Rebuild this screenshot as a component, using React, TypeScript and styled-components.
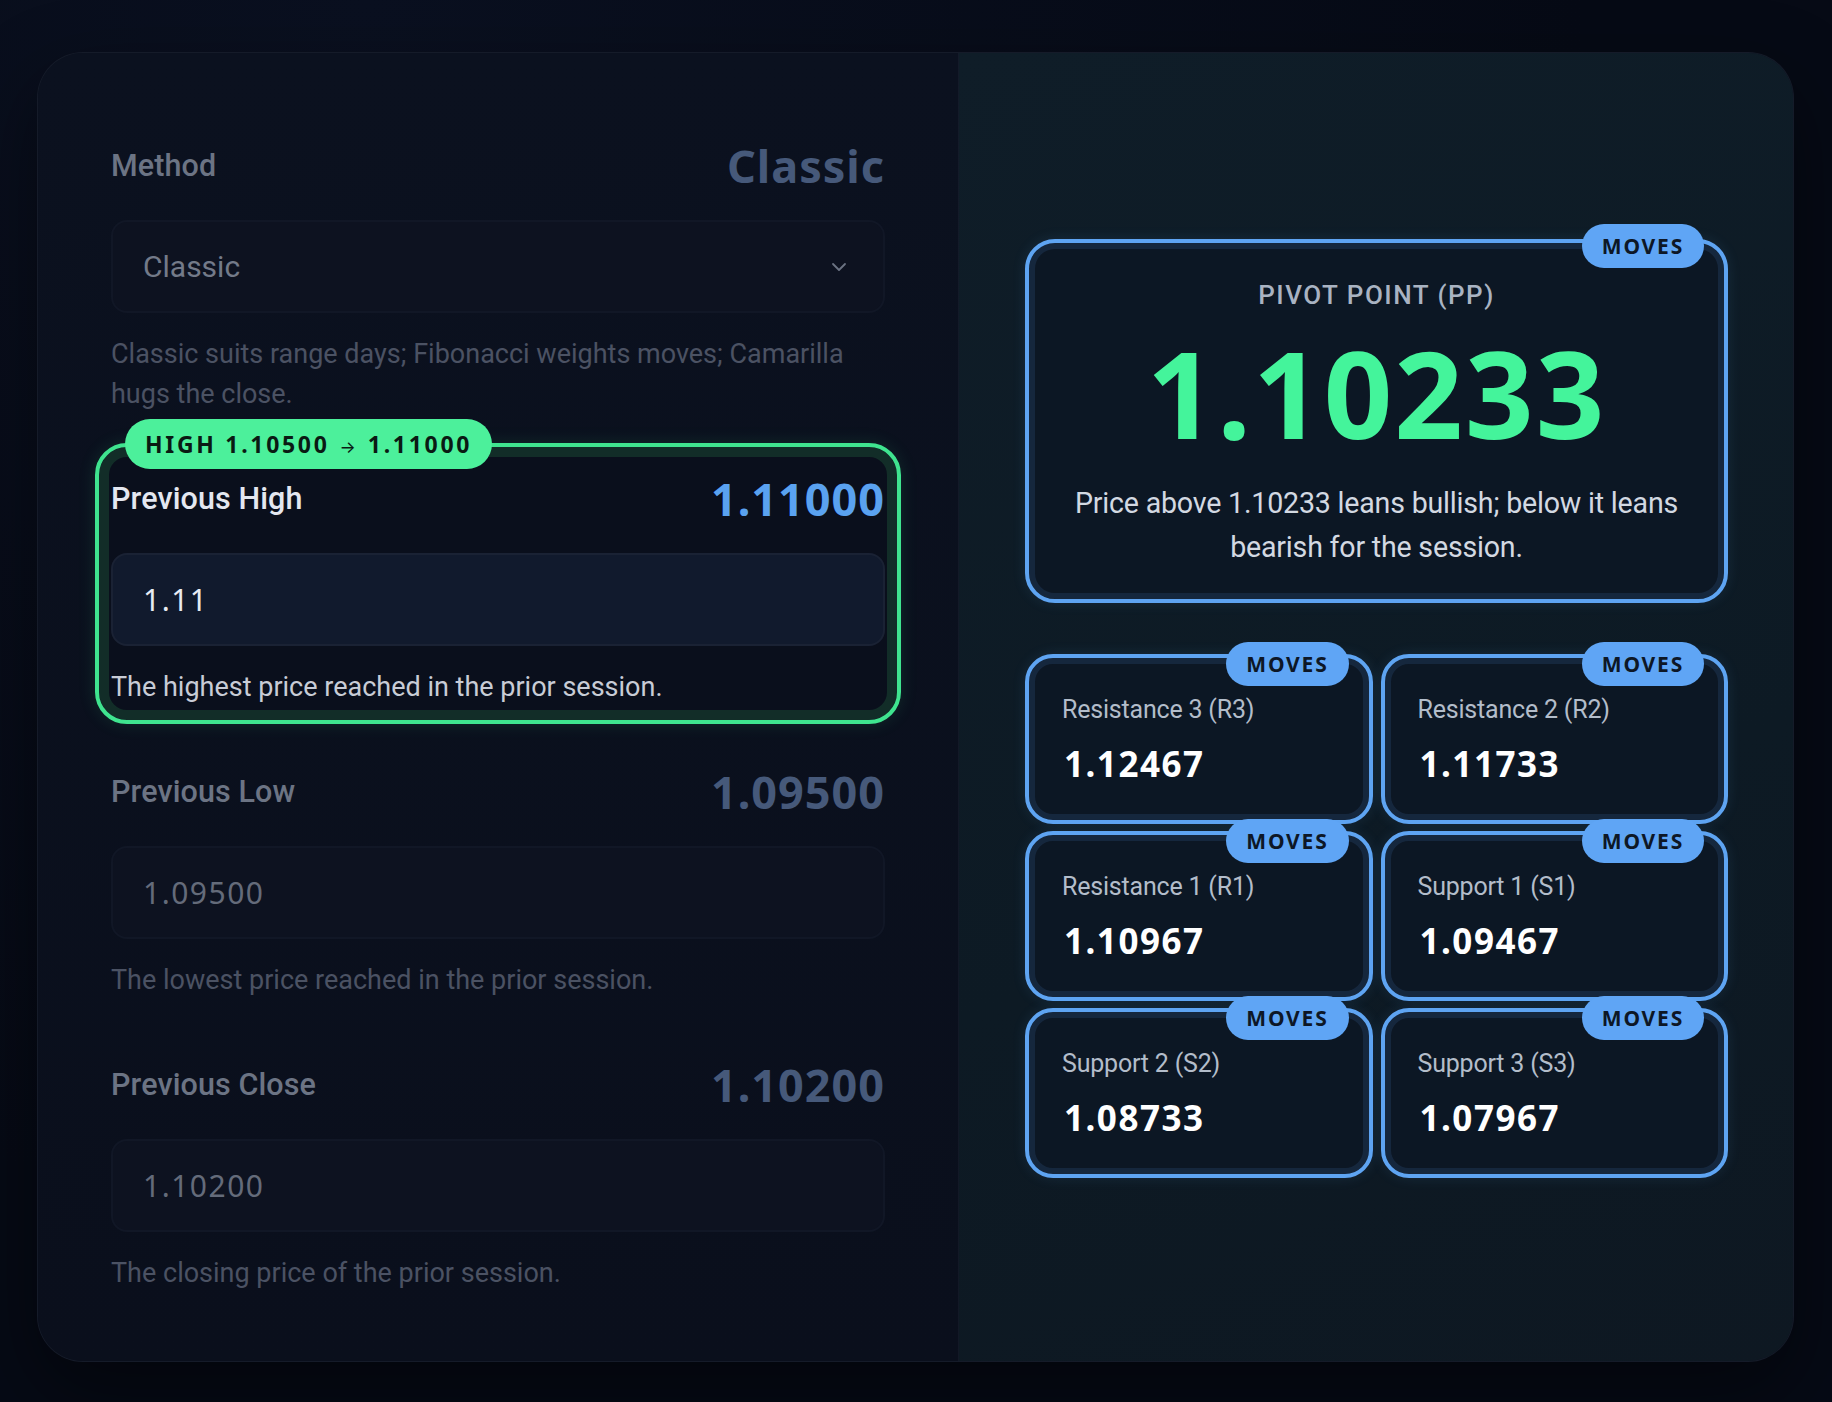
import styled, { createGlobalStyle, css } from "styled-components";

const GlobalStyle = createGlobalStyle`
    * {
        box-sizing: border-box;
    }

    body {
        margin: 0;
        background: radial-gradient(circle at 20% 0%, #0a1020 0%, #060a15 60%);
        font-family: Roboto, "Noto Sans", sans-serif;
        min-height: 100vh;
    }
`

const NUM_FONT = `"Noto Sans", Inter, sans-serif`

interface Field {
    id: string,
    label: string,
    value: string,
    input: string,
    help: string,
    active?: boolean,
    from?: string
}

const fields: Field[] = [
    {
        id: 'high',
        label: 'Previous High',
        value: '1.11000',
        input: '1.11',
        help: 'The highest price reached in the prior session.',
        active: true,
        from: '1.10500'
    },
    {
        id: 'low',
        label: 'Previous Low',
        value: '1.09500',
        input: '1.09500',
        help: 'The lowest price reached in the prior session.'
    },
    {
        id: 'close',
        label: 'Previous Close',
        value: '1.10200',
        input: '1.10200',
        help: 'The closing price of the prior session.'
    }
]

const levels = [
    { id: 'r3', label: 'Resistance 3 (R3)', value: '1.12467' },
    { id: 'r2', label: 'Resistance 2 (R2)', value: '1.11733' },
    { id: 'r1', label: 'Resistance 1 (R1)', value: '1.10967' },
    { id: 's1', label: 'Support 1 (S1)', value: '1.09467' },
    { id: 's2', label: 'Support 2 (S2)', value: '1.08733' },
    { id: 's3', label: 'Support 3 (S3)', value: '1.07967' }
]

const Chevron = () => (
    <svg width="16" height="10" viewBox="0 0 16 10" fill="none">
        <path d="M2 2l6 6 6-6" stroke="#6b7383" strokeWidth="1.8" strokeLinecap="round" strokeLinejoin="round" />
    </svg>
)

const App = () => {
    return (
        <>
            <GlobalStyle />
            <Page>
                <Card>
                    <Inputs>
                        <Group>
                            <LabelRow>
                                <Label $dim>Method</Label>
                                <Value $dim>Classic</Value>
                            </LabelRow>
                            <Select $dim>
                                <span>Classic</span>
                                <Chevron />
                            </Select>
                            <Help $dim>Classic suits range days; Fibonacci weights moves; Camarilla hugs the close.</Help>
                        </Group>
                        {
                            fields.map((f) => (
                                <Group key={f.id} $active={f.active}>
                                    {f.from && (
                                        <GreenBadge>
                                            HIGH {f.from}<Arrow>→</Arrow>{f.value}
                                        </GreenBadge>
                                    )}
                                    <LabelRow>
                                        <Label $dim={!f.active}>{f.label}</Label>
                                        <Value $dim={!f.active}>{f.value}</Value>
                                    </LabelRow>
                                    <NumInput $dim={!f.active} type="text" defaultValue={f.input} />
                                    <Help $dim={!f.active}>{f.help}</Help>
                                </Group>
                            ))
                        }
                    </Inputs>
                    <Results>
                        <PivotBox>
                            <BlueBadge $top={-19}>MOVES</BlueBadge>
                            <PivotTitle>PIVOT POINT (PP)</PivotTitle>
                            <PivotValue>1.10233</PivotValue>
                            <PivotText>Price above 1.10233 leans bullish; below it leans bearish for the session.</PivotText>
                        </PivotBox>
                        <LevelGrid>
                            {
                                levels.map((l) => (
                                    <LevelBox key={l.id}>
                                        <BlueBadge $top={-16}>MOVES</BlueBadge>
                                        <LevelLabel>{l.label}</LevelLabel>
                                        <LevelValue>{l.value}</LevelValue>
                                    </LevelBox>
                                ))
                            }
                        </LevelGrid>
                    </Results>
                </Card>
            </Page>
        </>
    )
}

export default App;

const Page = styled.div`
    padding: 52px 38px 40px 37px;
`

const Card = styled.div`
    width: 1757px;
    height: 1310px;
    display: grid;
    grid-template-columns: 921px 1fr;
    border-radius: 46px;
    overflow: hidden;
    border: 1px solid rgba(120, 140, 170, 0.09);
    background: #0b101d;
    box-shadow: 0 30px 80px rgba(0, 0, 0, 0.45);
`

const Inputs = styled.div`
    padding: 88px 73px 70px 73px;
    display: flex;
    flex-direction: column;
    gap: 60px;
    background: linear-gradient(180deg, #0b111f 0%, #0a0f1c 100%);
    border-right: 1px solid rgba(120, 140, 170, 0.08);
`

const Group = styled.div<{ $active?: boolean }>`
    display: flex;
    flex-direction: column;
    position: relative;

    ${({ $active }) => $active && css`
        margin: -31px -16px -17px;
        padding: 27px 12px 13px;
        border: 4px solid #3fe48f;
        border-radius: 32px;
        background: #0a0f1c;
        box-shadow: inset 0 0 0 10px #122d28, 0 0 18px rgba(63, 228, 143, 0.12);
    `}
`

const LabelRow = styled.div`
    height: 48px;
    display: flex;
    align-items: center;
    justify-content: space-between;
    margin-bottom: 31px;
`

const Label = styled.div<{ $dim?: boolean }>`
    font-size: 30.5px;
    font-weight: 500;
    letter-spacing: 0.1px;
    color: ${({ $dim }) => $dim ? '#6c7484' : '#e4e7f0'};
`

const Value = styled.div<{ $dim?: boolean }>`
    font-family: ${NUM_FONT};
    font-size: 45px;
    font-weight: 700;
    letter-spacing: 1px;
    font-variant-numeric: tabular-nums;
    color: ${({ $dim }) => $dim ? '#46597a' : '#5aa2f0'};
`

const fieldBox = css<{ $dim?: boolean }>`
    height: 93px;
    width: 100%;
    border-radius: 16px;
    border: 2px solid ${({ $dim }) => $dim ? '#111726' : '#1a2234'};
    background: ${({ $dim }) => $dim ? '#0d1220' : '#111a2d'};
    padding: 0 30px;
`

const Select = styled.div<{ $dim?: boolean }>`
    ${fieldBox};
    display: flex;
    align-items: center;
    justify-content: space-between;
    font-size: 30px;
    color: #737a89;

    & > svg {
        margin-right: 6px;
    }
`

const NumInput = styled.input<{ $dim?: boolean }>`
    ${fieldBox};
    outline: 0;
    font-family: ${NUM_FONT};
    font-size: 30px;
    letter-spacing: 1.5px;
    color: ${({ $dim }) => $dim ? '#646b7a' : '#e8ebf3'};
`

const Help = styled.p<{ $dim?: boolean }>`
    margin: 21px 0 0;
    font-size: 27px;
    line-height: 40px;
    color: ${({ $dim }) => $dim ? '#4b5263' : '#c8ccd6'};
`

const GreenBadge = styled.div`
    position: absolute;
    top: -28px;
    left: 26px;
    height: 50px;
    line-height: 50px;
    padding: 0 20px;
    border-radius: 25px;
    background: #4cf09b;
    color: #0a1a13;
    font-family: ${NUM_FONT};
    font-size: 23px;
    font-weight: 700;
    letter-spacing: 2.7px;
    white-space: nowrap;
`

const Arrow = styled.span`
    display: inline-block;
    margin: 0 12px 0 10px;
    font-size: 17px;
    font-weight: 400;
    letter-spacing: 0;
`

const Results = styled.div`
    padding: 0 65px 0 66px;
    display: flex;
    flex-direction: column;
    justify-content: center;
    gap: 51px;
    background: linear-gradient(160deg, #0f1d28 0%, #0d1a24 60%, #0e1822 100%);
`

const boxFrame = css`
    position: relative;
    border: 4px solid #5ea4f2;
    background: #0c1724;
    box-shadow: inset 0 0 0 6px rgba(40, 70, 110, 0.35), 0 0 14px rgba(94, 164, 242, 0.12);
`

const PivotBox = styled.div`
    ${boxFrame};
    border-radius: 30px;
    padding: 36px 40px 30px;
    display: flex;
    flex-direction: column;
    align-items: center;
    text-align: center;
`

const BlueBadge = styled.div<{ $top: number }>`
    position: absolute;
    top: ${({ $top }) => $top}px;
    right: 20px;
    height: 44px;
    padding: 0 20px;
    display: flex;
    align-items: center;
    border-radius: 22px;
    background: #5fa5f5;
    color: #0d1726;
    font-family: ${NUM_FONT};
    font-size: 21px;
    font-weight: 700;
    letter-spacing: 1.8px;
`

const PivotTitle = styled.div`
    font-size: 26px;
    font-weight: 500;
    letter-spacing: 1.5px;
    line-height: 32px;
    color: #a9b3c2;
`

const PivotValue = styled.div`
    margin-top: 12px;
    font-family: ${NUM_FONT};
    font-size: 120px;
    font-weight: 700;
    line-height: 140px;
    letter-spacing: 2px;
    font-variant-numeric: tabular-nums;
    color: #44f49b;
`

const PivotText = styled.p`
    margin: 18px 0 0;
    font-size: 28.6px;
    line-height: 44px;
    letter-spacing: -0.2px;
    color: #d3d9e2;
`

const LevelGrid = styled.div`
    display: grid;
    grid-template-columns: 1fr 1fr;
    column-gap: 8px;
    row-gap: 7px;
`

const LevelBox = styled.div`
    ${boxFrame};
    height: 170px;
    border-radius: 28px;
    padding: 35px 33px 0;
    display: flex;
    flex-direction: column;
`

const LevelLabel = styled.div`
    font-size: 25px;
    line-height: 34px;
    letter-spacing: -0.2px;
    color: #b3bdca;
`

const LevelValue = styled.div`
    margin-top: 13px;
    padding-left: 2px;
    font-family: ${NUM_FONT};
    font-size: 35px;
    font-weight: 700;
    letter-spacing: 1.5px;
    font-variant-numeric: tabular-nums;
    color: #ffffff;
`
